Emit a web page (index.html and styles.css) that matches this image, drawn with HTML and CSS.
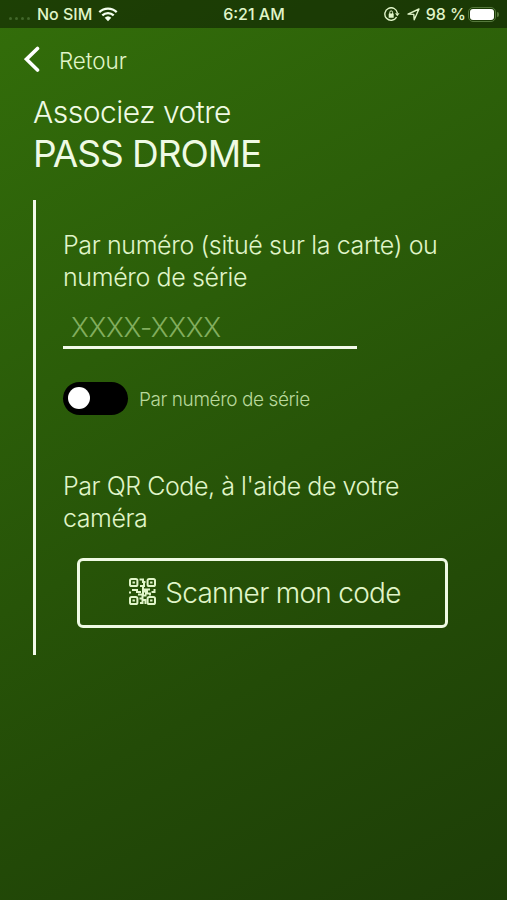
FILE: index.html
```html
<!DOCTYPE html>
<html lang="fr">
<head>
    <meta charset="UTF-8">
    <meta name="viewport" content="width=device-width, initial-scale=1.0">
    <title>Pass Drome</title>
    <link rel="stylesheet" href="styles.css">
</head>
<body>
    <div class="status-bar">
        <div class="status-left">
            <span class="dots"><i></i><i></i><i></i><i></i></span>
            <span class="carrier">No SIM</span>
            <svg class="wifi" width="20" height="15" viewBox="0 0 20 15">
                <path d="M1.3 5.2a12.6 12.6 0 0 1 17.4 0M4.3 8.3a8.3 8.3 0 0 1 11.4 0" fill="none" stroke="currentColor" stroke-width="2.3"/>
                <path d="M10 14.2l-3.3-3.4a4.8 4.8 0 0 1 6.6 0z" fill="currentColor"/>
            </svg>
        </div>
        <span class="time">6:21 AM</span>
        <div class="status-right">
            <svg width="16" height="15" viewBox="0 0 16 15">
                <path d="M12.6 10.2a6.3 6.3 0 1 1 .8-4" fill="none" stroke="currentColor" stroke-width="1.4"/>
                <path d="M11 6.2h4.6l-2.3 3z" fill="currentColor"/>
                <rect x="4.7" y="6.5" width="5" height="4.2" rx=".5" fill="currentColor"/>
                <path d="M5.8 7V5.3a1.4 1.4 0 0 1 2.8 0V7" fill="none" stroke="currentColor"/>
            </svg>
            <svg class="location" width="13" height="13" viewBox="0 0 13 13">
                <path d="M1 6.1L12 1 7.2 11.8 6.8 6.4z" fill="none" stroke="currentColor" stroke-width="1.4" stroke-linejoin="round"/>
            </svg>
            <span class="percent">98 %</span>
            <span class="battery"></span>
        </div>
    </div>

    <button class="back">
        <svg width="16" height="27" viewBox="0 0 16 27">
            <path d="M13.5 2.5L2.5 13.2l11 10.8" fill="none" stroke="currentColor" stroke-width="3.6" stroke-linecap="round"/>
        </svg>
        <span>Retour</span>
    </button>

    <div class="container">
        <h1><span class="title-small">Associez votre</span><span class="title-big">PASS DROME</span></h1>

        <div class="content">
            <label class="text text-number" for="number">Par numéro (situé sur la carte) ou<br>numéro de série</label>
            <input type="text" id="number" placeholder="XXXX-XXXX">
            <div class="switch-row">
                <span class="switch"></span>
                <span class="switch-label">Par numéro de série</span>
            </div>
            <p class="text text-qr">Par QR Code, à l'aide de votre<br>caméra</p>
            <button class="scan">
                <svg width="27" height="27" viewBox="0 0 27 27">
                    <g fill="none" stroke="currentColor" stroke-width="2">
                        <rect x="1" y="1" width="7.4" height="7" rx="1.6"/>
                        <rect x="18.6" y="1" width="7.4" height="7" rx="1.6"/>
                        <rect x="1" y="19" width="7.4" height="7" rx="1.6"/>
                        <rect x="18.6" y="19" width="7.4" height="7" rx="1.6"/>
                        <path d="M10.500 1.500h3.500v2.500h2.500M11 8h4V5M14 8v3.500h3.500M1 15.500v-2M3 12h5v2h4M9 16.500h5v-3h4v-2h3M16 15.500h5v2M22.500 14h3.500M25.500 11v4M10.500 20.500h3V17.500h4M11 25h2.500v-3h3V26"/>
                    </g>
                    <path d="M3.500 3.500h2.400v2H3.500zM21.100 3.500h2.400v2h-2.400zM3.500 21.500h2.400v2H3.500zM21.100 21.500h2.400v2h-2.400z" fill="currentColor"/>
                </svg>
                <span>Scanner mon code</span>
            </button>
        </div>
    </div>
</body>
</html>
```
FILE: styles.css
```css
* {
    box-sizing: border-box;
}
body {
    margin: 0;
    min-height: 900px;
    font-family: Inter, "Liberation Sans", sans-serif;
    font-weight: 300;
    color: #e0f5c9;
    background: linear-gradient(152deg, #336e0a 0%, #2b5d09 35%, #234b07 70%, #1d3e07 100%);
}
h1, p {
    margin: 0;
    font-weight: 300;
}
button {
    padding: 0;
    border: none;
    background: none;
    font: inherit;
    color: inherit;
    cursor: pointer;
}
svg {
    display: block;
    flex: none;
}
.status-bar {
    display: grid;
    grid-template-columns: 1fr auto 1fr;
    align-items: center;
    height: 28px;
    padding: 0 8px 0 9px;
    background: rgba(0, 0, 0, 0.42);
    font-size: 16px;
    font-weight: 500;
    white-space: nowrap;
}
.status-left, .status-right {
    display: flex;
    align-items: center;
}
.status-right {
    justify-content: flex-end;
}
.dots {
    display: flex;
    gap: 3px;
    width: 28px;
    padding-top: 9px;
}
.dots i {
    width: 3px;
    height: 3px;
    border-radius: 50%;
    background: #41672a;
}
.wifi {
    margin-left: 6px;
    color: #f5fff0;
}
.location {
    margin: 0 6px 0 7px;
}
.battery {
    position: relative;
    width: 28px;
    height: 15px;
    margin: 0 3px 0 2px;
    padding: 1px;
    border: 1px solid #55793c;
    border-radius: 5px;
}
.battery::before {
    content: "";
    display: block;
    height: 11px;
    border-radius: 3px;
    background: #fff;
}
.battery::after {
    content: "";
    position: absolute;
    top: 4px;
    right: -4px;
    width: 2px;
    height: 5px;
    border-radius: 0 2px 2px 0;
    background: #55793c;
}
.back {
    display: flex;
    align-items: center;
    gap: 19px;
    height: 28px;
    margin: 17px 0 0 24px;
    font-size: 22.5px;
    letter-spacing: -0.1px;
}
.back span {
    padding-top: 2px;
}
.back svg {
    color: #fff;
}
.container {
    padding: 20px 34px 0 33px;
}
h1 {
    color: #effae4;
    white-space: nowrap;
}
.title-small, .title-big {
    display: block;
}
.title-small {
    font-size: 30px;
    line-height: 38px;
    letter-spacing: -0.5px;
}
.title-big {
    font-size: 37px;
    line-height: 46px;
    font-weight: 400;
    letter-spacing: -1.05px;
}
.content {
    height: 455px;
    margin-top: 23px;
    padding: 29px 0 0 27px;
    border-left: 3px solid #f2faea;
}
.text {
    display: block;
    font-size: 25px;
    line-height: 32px;
    letter-spacing: -0.37px;
    white-space: nowrap;
}
input {
    display: block;
    width: 294px;
    height: 43px;
    margin-top: 13px;
    padding: 3px 8px 0;
    border: none;
    border-bottom: 3px solid #f2faea;
    background: none;
    font: inherit;
    font-size: 27px;
    letter-spacing: -0.4px;
    color: inherit;
    outline: none;
}
input::placeholder {
    color: #82ae5e;
    opacity: 1;
}
.switch-row {
    display: flex;
    align-items: center;
    gap: 11px;
    margin-top: 33px;
    font-size: 19px;
    letter-spacing: -0.42px;
    color: #b9d99c;
}
.switch {
    width: 65px;
    height: 33px;
    padding: 5px;
    border-radius: 17px;
    background: #000;
}
.switch::before {
    content: "";
    display: block;
    width: 22px;
    height: 22px;
    border-radius: 50%;
    background: #fff;
}
.switch-label {
    padding-top: 1px;
}
.text-qr {
    margin-top: 55px;
    letter-spacing: -0.44px;
}
.scan {
    display: flex;
    align-items: center;
    justify-content: center;
    gap: 9px;
    width: 371px;
    height: 70px;
    margin: 24px 0 0 14px;
    padding: 0 0 1px 5px;
    border: 3px solid #effae4;
    border-radius: 6px;
    font-size: 28px;
    letter-spacing: -0.7px;
    white-space: nowrap;
}
.scan svg {
    margin-bottom: 3px;
}
```
